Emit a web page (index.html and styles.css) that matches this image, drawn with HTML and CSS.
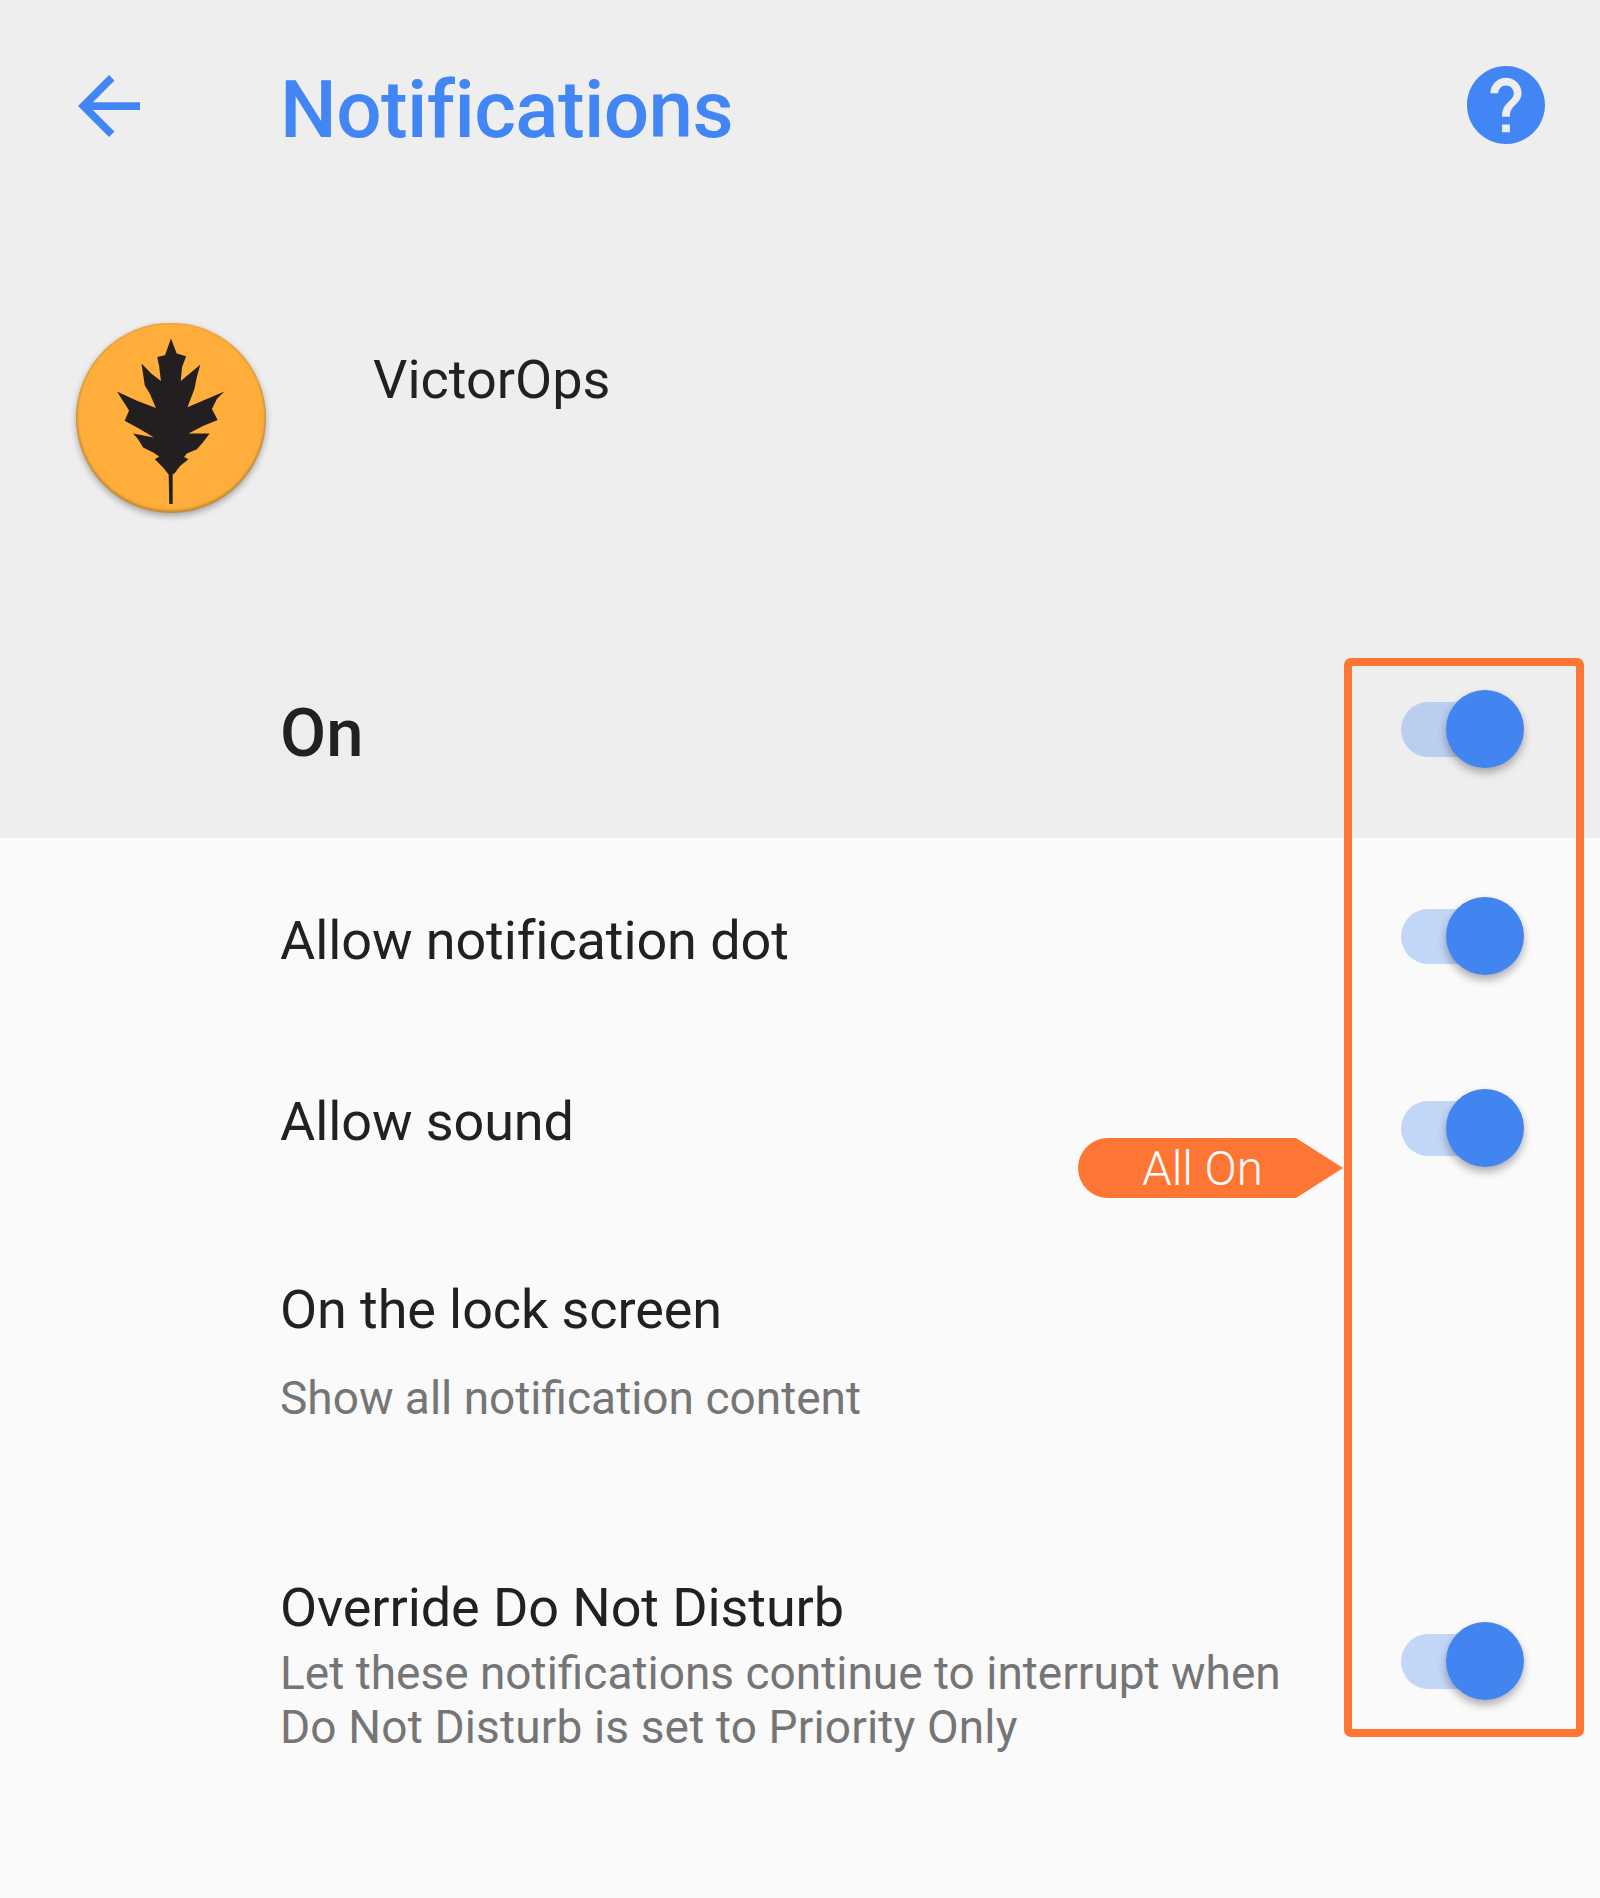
FILE: index.html
```html
<!DOCTYPE html>
<html lang="en">
<head>
    <meta charset="UTF-8">
    <title>Notifications</title>
    <link rel="stylesheet" href="styles.css">
</head>
<body>
    <div class="page">
        <div class="top-section">
            <div class="topbar">
                <svg class="back-icon" viewBox="4 4 16 16"><path d="M20 11H7.83l5.59-5.59L12 4l-8 8 8 8 1.41-1.41L7.83 13H20v-2z"/></svg>
                <h1>Notifications</h1>
                <svg class="help-icon" viewBox="2 2 20 20"><path d="M12 2C6.48 2 2 6.48 2 12s4.48 10 10 10 10-4.48 10-10S17.52 2 12 2zm1 17h-2v-2h2v2zm2.07-7.75l-.9.92C13.45 12.9 13 13.5 13 15h-2v-.5c0-1.1.45-2.1 1.17-2.83l1.24-1.26c.37-.36.59-.86.59-1.41 0-1.1-.9-2-2-2s-2 .9-2 2H8c0-2.21 1.79-4 4-4s4 1.79 4 4c0 .88-.36 1.68-.93 2.25z"/></svg>
            </div>
            <div class="app-row">
                <svg class="app-logo" viewBox="50 39 566 566">
                    <circle class="logo-rim" cx="333" cy="322" r="283"/>
                    <circle class="logo-disc" cx="333" cy="318" r="279"/>
                    <path class="logo-leaf" d="M333 85L350 130L378 138L366 170L362 212L420 163L410 200L403 235L382 290L492 243L470 265L455 295L472 328L430 345L385 368L448 368L428 395L410 415L380 428L372 438L385 445L360 465L345 485L338 490L338 578L328 578L326 490L310 470L285 445L298 437L280 425L250 410L235 385L220 368L282 380L240 355L195 330L208 300L172 243L230 270L288 292L270 250L255 225L245 160L275 190L303 212L298 170L292 140L315 135Z"/>
                </svg>
                <span class="app-name">VictorOps</span>
            </div>
            <div class="on-row">
                <span class="on-label">On</span>
                <div class="toggle"><span class="knob"></span></div>
            </div>
        </div>

        <div class="setting setting-dot">
            <span class="setting-title">Allow notification dot</span>
            <div class="toggle"><span class="knob"></span></div>
        </div>
        <div class="setting setting-sound">
            <span class="setting-title">Allow sound</span>
            <div class="toggle"><span class="knob"></span></div>
        </div>
        <div class="setting setting-lock">
            <div class="setting-text">
                <div class="setting-title">On the lock screen</div>
                <div class="setting-sub">Show all notification content</div>
            </div>
        </div>
        <div class="setting setting-dnd">
            <div class="setting-text">
                <div class="setting-title">Override Do Not Disturb</div>
                <div class="setting-sub">Let these notifications continue to interrupt when<br><span class="sub-line">Do Not Disturb is set to Priority Only</span></div>
            </div>
            <div class="toggle"><span class="knob"></span></div>
        </div>

        <!-- annotation on top of the screenshot -->
        <div class="frame"></div>
        <div class="callout">All On</div>
    </div>
</body>
</html>
```

FILE: styles.css
```css
* {
    box-sizing: border-box;
    margin: 0;
    padding: 0;
}

body {
    font-family: Roboto, "Noto Sans", sans-serif;
    background-color: #fafafa;
    color: #212121;
}

.page {
    position: relative;
    height: 1898px;
    overflow: hidden;
}

.top-section {
    height: 838px;
    background-color: #eeeeee;
}

.topbar {
    display: flex;
    align-items: center;
    height: 212px;
    padding: 0 55px 0 78px;
}

.back-icon {
    width: 62px;
    height: 62px;
    fill: #4285f4;
}

h1 {
    margin: 7px 0 0 140px;
    font-size: 80px;
    font-weight: 500;
    letter-spacing: -0.6px;
    color: #4285f4;
}

.help-icon {
    width: 78px;
    height: 78px;
    margin: 0 0 2px auto;
    fill: #4285f4;
}

.app-row {
    display: flex;
    align-items: flex-start;
    height: 408px;
    padding: 111px 0 0 76px;
}

.app-logo {
    width: 190px;
    height: 190px;
    filter: drop-shadow(0 3px 3px rgba(0, 0, 0, 0.3));
}

.logo-rim {
    fill: #c48c36;
}

.logo-disc {
    fill: #ffae3b;
    filter: blur(3px);
}

.logo-leaf {
    fill: #231f20;
    filter: blur(2px);
}

.app-name {
    margin: 25px 0 0 107px;
    font-size: 54px;
}

.on-row {
    display: flex;
    align-items: center;
    height: 218px;
    padding: 0 76px 0 280px;
}

.on-label {
    margin-top: 7px;
    font-size: 67px;
    font-weight: 500;
}

.toggle {
    position: relative;
    flex: none;
    width: 123px;
    height: 55px;
    margin-left: auto;
}

.toggle::before {
    content: "";
    display: block;
    width: 110px;
    height: 55px;
    border-radius: 28px;
    background-color: rgba(66, 133, 244, 0.3);
}

.knob {
    position: absolute;
    top: -12px;
    right: 0;
    width: 78px;
    height: 78px;
    border-radius: 50%;
    background-color: #4285f0;
    box-shadow: 0 5px 8px rgba(0, 0, 0, 0.3);
}

.setting {
    display: flex;
    padding: 0 76px 0 280px;
}

.setting-title {
    font-size: 54px;
    line-height: 64px;
    letter-spacing: -0.1px;
}

.setting-sub {
    font-size: 46px;
    line-height: 54px;
    color: #757575;
}

.sub-line {
    letter-spacing: 0.15px;
}

.setting-dot {
    align-items: center;
    height: 196px;
}

.setting-dot .setting-title {
    margin-top: 9px;
}

.setting-sound {
    align-items: center;
    height: 188px;
}

.setting-sound .setting-title {
    margin-bottom: 12px;
}

.setting-sound .toggle {
    margin-top: 1px;
}

.setting-lock {
    height: 354px;
    padding-top: 56px;
}

.setting-lock .setting-sub {
    margin-top: 29px;
}

.setting-dnd {
    align-items: center;
}

.setting-dnd .setting-title {
    margin-bottom: 6px;
}

.setting-dnd .toggle {
    margin-top: -8px;
}

.frame {
    position: absolute;
    top: 658px;
    left: 1344px;
    width: 240px;
    height: 1079px;
    border: 8px solid #ff7534;
    border-radius: 7px;
}

.callout {
    position: absolute;
    top: 1138px;
    left: 1078px;
    width: 218px;
    height: 60px;
    padding: 1px 0 0 64px;
    border-radius: 30px 0 0 30px;
    background-color: #ff7534;
    color: #ffffff;
    font-size: 47.5px;
    font-weight: 300;
    line-height: 60px;
    white-space: nowrap;
}

.callout::after {
    content: "";
    position: absolute;
    top: 0;
    left: 218px;
    border-top: 30px solid transparent;
    border-bottom: 30px solid transparent;
    border-left: 47px solid #ff7534;
}
```
